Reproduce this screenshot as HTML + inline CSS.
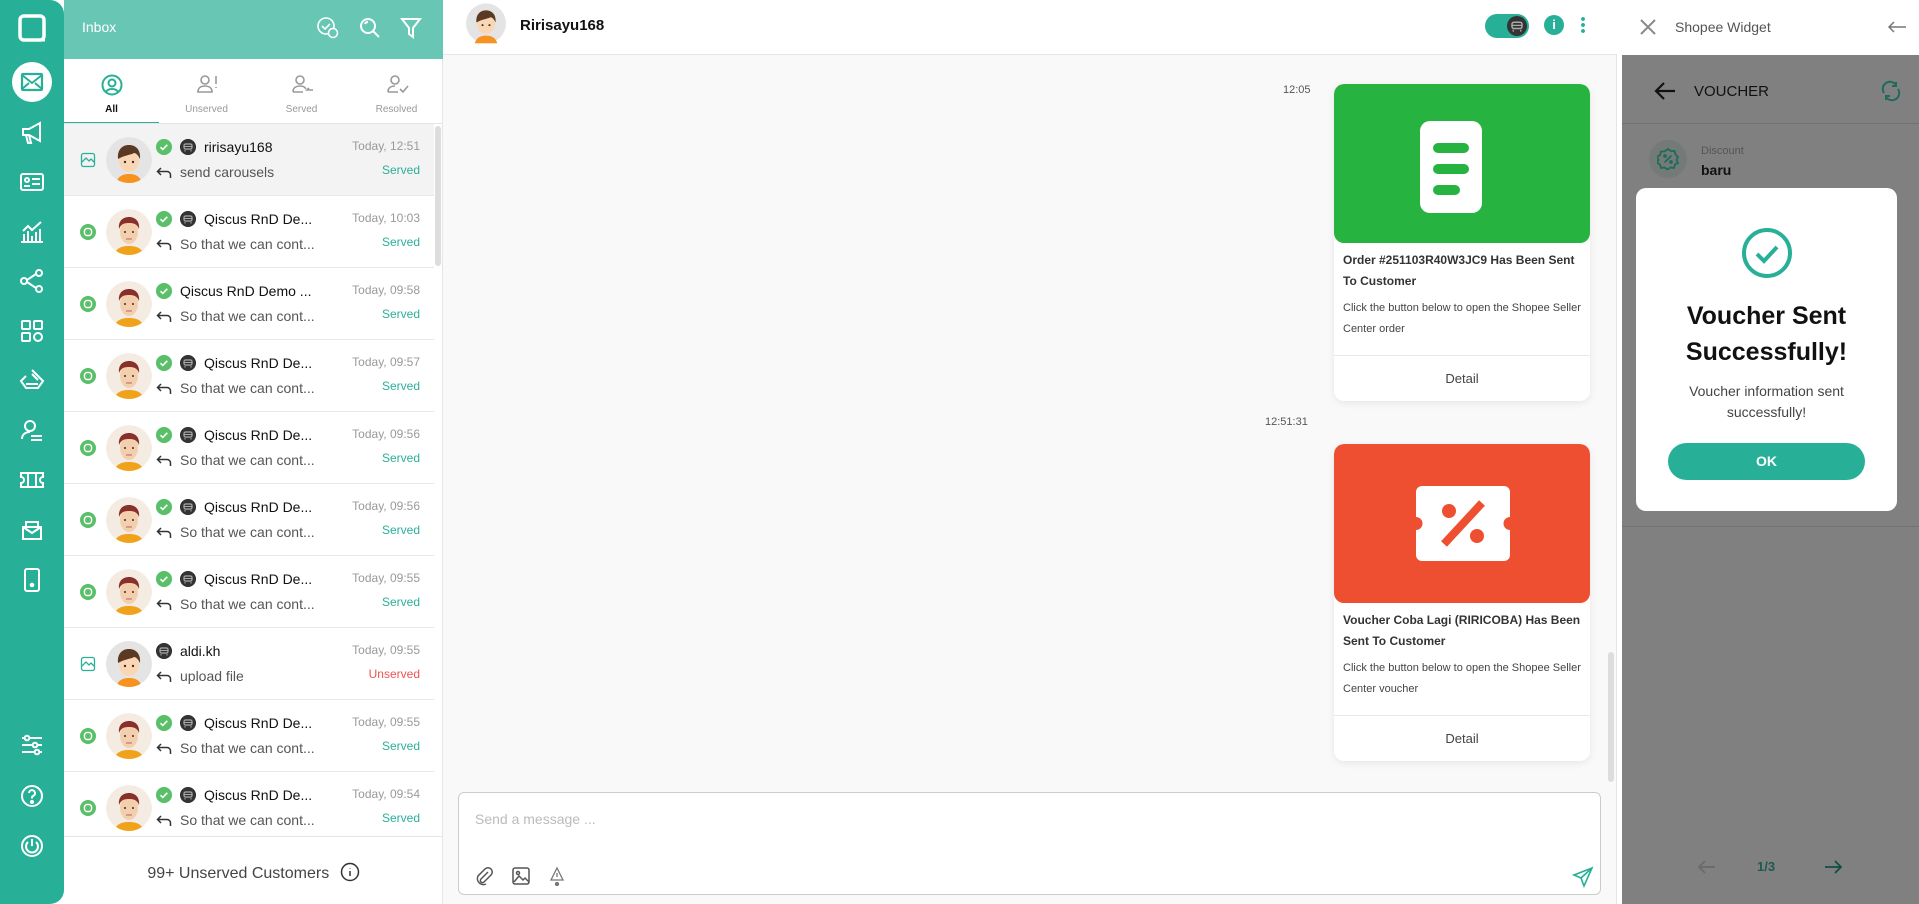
<!DOCTYPE html>
<html><head><meta charset="utf-8">
<style>
*{box-sizing:border-box;margin:0;padding:0}
body{width:1919px;height:904px;overflow:hidden;background:#fff;font-family:"Liberation Sans",sans-serif;position:relative}
.abs{position:absolute}
#side{left:0;top:0;width:64px;height:904px;background:#27b097;border-radius:0 14px 14px 0;z-index:3}
.si{position:absolute;left:17px;width:30px;height:30px}
#list{left:64px;top:0;width:379px;height:904px;background:#fff;border-right:1px solid #e6e6e6}
#lhead{left:0;top:0;width:379px;height:59px;background:#67c7b4}
.row{position:absolute;left:0;width:370px;height:72px;border-bottom:1px solid #e8e8e8}
.row .av{position:absolute;left:42px;top:13px;width:46px;height:46px;border-radius:50%;overflow:hidden}
.row .nm{position:absolute;top:15px;font-size:14px;color:#111;white-space:nowrap}
.row .msg{position:absolute;left:116px;top:40px;font-size:14px;color:#555;white-space:nowrap}
.row .tm{position:absolute;right:14px;top:15px;font-size:12px;color:#999}
.row .st{position:absolute;right:14px;top:39px;font-size:12px;color:#2ab097}
.chk{position:absolute;top:15px;left:92px;width:16px;height:16px;border-radius:50%;background:#5bbf6a}
.bot{position:absolute;top:15px;width:16px;height:16px;border-radius:50%;background:#333}
.rep{position:absolute;left:92px;top:42px;width:16px;height:14px}
.lic{position:absolute;left:16px;top:28px;width:16px;height:16px}
.tab{position:absolute;top:59px;width:95px;height:65px;text-align:center;font-size:10px;color:#999}
.card{position:absolute;left:1334px;width:256px;background:#fff;border-radius:10px;box-shadow:0 2px 8px rgba(0,0,0,.08);overflow:hidden}
.card .img{height:159px;border-radius:10px;position:relative}
.card .t{font-size:12px;font-weight:bold;color:#333;line-height:21px;padding:7px 9px 0}
.card .d{font-size:11px;color:#444;line-height:21px;padding:6px 9px 0}
.card .btn{position:absolute;bottom:0;left:0;right:0;height:46px;border-top:1px solid #e8e8e8;text-align:center;line-height:46px;font-size:13px;color:#444}
</style></head><body>
<svg width="0" height="0" style="position:absolute">
<defs>
<symbol id="boy" viewBox="0 0 46 46"><circle cx="23" cy="23" r="23" fill="#e4e4e4"/><path d="M10 46c2-7 7-9 13-9s11 2 13 9z" fill="#f7921e"/><ellipse cx="23" cy="24" rx="10" ry="11" fill="#fbd6b5"/><path d="M12 22c-1-10 5-14 11-14s12 4 11 14c-2-4-4-6-6-6-3 2-9 2-16 6z" fill="#5a3a22"/><circle cx="19" cy="25" r="1.2" fill="#333"/><circle cx="27" cy="25" r="1.2" fill="#333"/></symbol>
<symbol id="man" viewBox="0 0 46 46"><circle cx="23" cy="23" r="23" fill="#f4ece2"/><path d="M8 46c2-7 8-9 15-9s13 2 15 9z" fill="#f0a21a"/><ellipse cx="23" cy="23" rx="9" ry="12" fill="#f3cfae"/><path d="M13 20c-1-9 5-12 10-12s11 3 10 12c-2-5-5-6-10-6s-8 1-10 6z" fill="#8b2f2a"/><circle cx="19" cy="23" r="1" fill="#333"/><circle cx="27" cy="23" r="1" fill="#333"/><path d="M20 30h6" stroke="#b66" stroke-width="1"/></symbol>
<symbol id="botg" viewBox="0 0 16 16"><circle cx="8" cy="8" r="8" fill="#333"/><rect x="4" y="5" width="8" height="5" rx="1.5" fill="none" stroke="#aaa" stroke-width="1.2"/><path d="M5 11v1.5M11 11v1.5M4 7.5h8" stroke="#aaa" stroke-width="1"/></symbol>
<symbol id="chkg" viewBox="0 0 16 16"><circle cx="8" cy="8" r="8" fill="#5bbf6a"/><path d="M4.5 8.2l2.3 2.2 4.5-4.6" stroke="#fff" stroke-width="1.6" fill="none"/></symbol>
<symbol id="repg" viewBox="0 0 16 14"><path d="M5 2L1.5 5.5 5 9M1.5 5.5H11c2 0 3.5 1.5 3.5 3.5v3" stroke="#333" stroke-width="1.5" fill="none"/></symbol>
<symbol id="qg" viewBox="0 0 16 16"><circle cx="8" cy="8" r="8" fill="#5bbf6a"/><rect x="4.5" y="4.5" width="7" height="7" rx="2.5" fill="none" stroke="#fff" stroke-width="1.4"/></symbol>
<symbol id="imgg" viewBox="0 0 16 16"><rect x="1.5" y="1.5" width="13" height="13" rx="2" fill="none" stroke="#2ab097" stroke-width="1.3"/><path d="M2 10l4-4 3 3 2-2 3 3" stroke="#2ab097" stroke-width="1.3" fill="none"/></symbol>
</defs></svg>

<!-- Sidebar -->
<div id="side" class="abs">
<svg class="si" style="top:13px;width:30px;height:30px" viewBox="0 0 30 30"><path d="M7 3h16a4 4 0 0 1 4 4v16a4 4 0 0 1-4 4H7a4 4 0 0 1-4-4V7a4 4 0 0 1 4-4z" fill="none" stroke="#fff" stroke-width="3.5"/><path d="M22 27h6" stroke="#fff" stroke-width="3"/></svg>
<div style="position:absolute;left:12px;top:62px;width:40px;height:40px;border-radius:50%;background:#fff"></div>
<svg class="si" style="left:20px;top:70px;width:24px;height:24px" viewBox="0 0 24 24"><rect x="2" y="4" width="20" height="16" rx="1" fill="none" stroke="#27b097" stroke-width="2.2"/><path d="M2 5l10 8 10-8M2 19l7-6M22 19l-7-6" stroke="#27b097" stroke-width="2" fill="none"/></svg>
<svg class="si" style="top:118px" viewBox="0 0 30 30" fill="none" stroke="#fff" stroke-width="2"><path d="M6 11h6l11-6v18l-11-6H6zM9 17l2 8h3l-2-8"/></svg>
<svg class="si" style="top:167px" viewBox="0 0 30 30" fill="none" stroke="#fff" stroke-width="2"><rect x="4" y="7" width="22" height="16" rx="2"/><circle cx="10" cy="13" r="2"/><path d="M7 19h6M15 12h8M15 17h8"/></svg>
<svg class="si" style="top:217px" viewBox="0 0 30 30" fill="none" stroke="#fff" stroke-width="2"><path d="M4 25h22M7 24v-7M11 24v-10M15 24v-5M19 24v-9M23 24v-12M6 14l5-5 4 4 9-8"/></svg>
<svg class="si" style="top:266px" viewBox="0 0 30 30" fill="none" stroke="#fff" stroke-width="2"><circle cx="7" cy="15" r="3"/><circle cx="22" cy="7" r="3"/><circle cx="22" cy="23" r="3"/><path d="M10 14l9-6M10 16l9 6"/></svg>
<svg class="si" style="top:316px" viewBox="0 0 30 30" fill="none" stroke="#fff" stroke-width="2"><rect x="5" y="5" width="8" height="8" rx="1"/><rect x="17" y="5" width="8" height="8" rx="1"/><rect x="5" y="17" width="8" height="8" rx="1"/><rect x="17" y="17" width="8" height="8" rx="4"/></svg>
<svg class="si" style="top:365px" viewBox="0 0 30 30" fill="none" stroke="#fff" stroke-width="2"><path d="M15 5l11 11-5 7H9l-5-7 5-5M15 9l6 6M9 19h12"/></svg>
<svg class="si" style="top:415px" viewBox="0 0 30 30" fill="none" stroke="#fff" stroke-width="2"><circle cx="13" cy="11" r="5"/><path d="M5 24c0-5 4-7 8-7M14 21h11M14 25h11"/></svg>
<svg class="si" style="top:465px" viewBox="0 0 30 30" fill="none" stroke="#fff" stroke-width="2"><path d="M4 8h22v4a3 3 0 0 0 0 6v4H4v-4a3 3 0 0 0 0-6zM11 8v14M19 8v14"/></svg>
<svg class="si" style="top:515px" viewBox="0 0 30 30" fill="none" stroke="#fff" stroke-width="2"><path d="M6 12h18v12H6zM6 12l9 6 9-6M9 12V7h12v5"/></svg>
<svg class="si" style="top:565px" viewBox="0 0 30 30" fill="none" stroke="#fff" stroke-width="2"><rect x="8" y="4" width="14" height="22" rx="2"/><circle cx="15" cy="20" r="1.3" fill="#fff"/></svg>
<svg class="si" style="top:730px" viewBox="0 0 30 30" fill="none" stroke="#fff" stroke-width="2"><path d="M5 8h20M5 15h20M5 22h20"/><circle cx="10" cy="8" r="2.3" fill="#27b097"/><circle cx="18" cy="15" r="2.3" fill="#27b097"/><circle cx="20" cy="22" r="2.3" fill="#27b097"/></svg>
<svg class="si" style="top:781px" viewBox="0 0 30 30" fill="none" stroke="#fff" stroke-width="2"><circle cx="15" cy="15" r="10"/><path d="M12 12a3 3 0 1 1 4 3c-1 .5-1 1-1 2.5"/><circle cx="15" cy="21" r="1" fill="#fff"/></svg>
<svg class="si" style="top:831px" viewBox="0 0 30 30" fill="none" stroke="#fff" stroke-width="2"><circle cx="15" cy="15" r="10"/><path d="M11 11a6 6 0 1 0 8 0M15 8v7"/></svg>
</div>

<!-- List -->
<div id="list" class="abs">
<div id="lhead" class="abs">
<div style="position:absolute;left:18px;top:19px;color:#fff;font-size:14px">Inbox</div>
<svg style="position:absolute;left:252px;top:16px" width="24" height="24" viewBox="0 0 24 24" fill="none" stroke="#fff" stroke-width="1.6"><circle cx="10" cy="10" r="8"/><path d="M6 10l3 3 5-5"/><circle cx="17" cy="17" r="4.5" fill="#67c7b4"/></svg>
<svg style="position:absolute;left:294px;top:16px" width="24" height="24" viewBox="0 0 24 24" fill="none" stroke="#fff" stroke-width="2"><circle cx="10" cy="10" r="7"/><path d="M15 15l6 6M7 8a3 3 0 0 1 3-2"/></svg>
<svg style="position:absolute;left:336px;top:16px" width="22" height="24" viewBox="0 0 22 24" fill="none" stroke="#fff" stroke-width="2"><path d="M2 3h18l-7 9v9l-4-3v-6z"/></svg>
</div>
<div class="tab" style="left:0;color:#111;font-weight:bold;border-bottom:2px solid #27b097">
<svg style="position:absolute;left:37px;top:15px" width="22" height="22" viewBox="0 0 22 22" fill="none" stroke="#27b097" stroke-width="2"><circle cx="11" cy="11" r="9.5"/><circle cx="11" cy="9" r="3.5"/><path d="M5 18c2-4 10-4 12 0"/></svg>
<div style="position:absolute;top:45px;width:100%">All</div></div>
<div class="tab" style="left:95px"><svg style="position:absolute;left:36px;top:15px" width="24" height="20" viewBox="0 0 24 20" fill="none" stroke="#999" stroke-width="1.6"><circle cx="10" cy="6" r="4"/><path d="M3 18c0-5 4-6 7-6s7 1 7 6zM21 2v8M21 13v1"/></svg><div style="position:absolute;top:45px;width:100%">Unserved</div></div>
<div class="tab" style="left:190px"><svg style="position:absolute;left:36px;top:15px" width="24" height="20" viewBox="0 0 24 20" fill="none" stroke="#999" stroke-width="1.6"><circle cx="10" cy="6" r="4"/><path d="M3 18c0-5 4-6 7-6s5 1 6 3M3 18h10M23 16h-6l2-2"/></svg><div style="position:absolute;top:45px;width:100%">Served</div></div>
<div class="tab" style="left:285px"><svg style="position:absolute;left:36px;top:15px" width="24" height="20" viewBox="0 0 24 20" fill="none" stroke="#999" stroke-width="1.6"><circle cx="10" cy="6" r="4"/><path d="M3 18c0-5 4-6 7-6M3 18h10M15 15l3 3 5-6"/></svg><div style="position:absolute;top:45px;width:100%">Resolved</div></div>
<div style="position:absolute;left:0;top:123px;width:379px;height:1px;background:#e5e5e5"></div>

<div style="position:absolute;left:0;top:124px;width:379px;height:712px;overflow:hidden">
<div class="row" style="top:0;background:#f3f3f3"><svg class="lic"><use href="#imgg"/></svg><svg class="av"><use href="#boy"/></svg><svg class="chk"><use href="#chkg"/></svg><svg class="bot" style="left:116px"><use href="#botg"/></svg><div class="nm" style="left:140px">ririsayu168</div><svg class="rep"><use href="#repg"/></svg><div class="msg">send carousels</div><div class="tm">Today, 12:51</div><div class="st">Served</div></div>
<div class="row" style="top:72px"><svg class="lic"><use href="#qg"/></svg><svg class="av"><use href="#man"/></svg><svg class="chk"><use href="#chkg"/></svg><svg class="bot" style="left:116px"><use href="#botg"/></svg><div class="nm" style="left:140px">Qiscus RnD De...</div><svg class="rep"><use href="#repg"/></svg><div class="msg">So that we can cont...</div><div class="tm">Today, 10:03</div><div class="st">Served</div></div>
<div class="row" style="top:144px"><svg class="lic"><use href="#qg"/></svg><svg class="av"><use href="#man"/></svg><svg class="chk"><use href="#chkg"/></svg><div class="nm" style="left:116px">Qiscus RnD Demo ...</div><svg class="rep"><use href="#repg"/></svg><div class="msg">So that we can cont...</div><div class="tm">Today, 09:58</div><div class="st">Served</div></div>
<div class="row" style="top:216px"><svg class="lic"><use href="#qg"/></svg><svg class="av"><use href="#man"/></svg><svg class="chk"><use href="#chkg"/></svg><svg class="bot" style="left:116px"><use href="#botg"/></svg><div class="nm" style="left:140px">Qiscus RnD De...</div><svg class="rep"><use href="#repg"/></svg><div class="msg">So that we can cont...</div><div class="tm">Today, 09:57</div><div class="st">Served</div></div>
<div class="row" style="top:288px"><svg class="lic"><use href="#qg"/></svg><svg class="av"><use href="#man"/></svg><svg class="chk"><use href="#chkg"/></svg><svg class="bot" style="left:116px"><use href="#botg"/></svg><div class="nm" style="left:140px">Qiscus RnD De...</div><svg class="rep"><use href="#repg"/></svg><div class="msg">So that we can cont...</div><div class="tm">Today, 09:56</div><div class="st">Served</div></div>
<div class="row" style="top:360px"><svg class="lic"><use href="#qg"/></svg><svg class="av"><use href="#man"/></svg><svg class="chk"><use href="#chkg"/></svg><svg class="bot" style="left:116px"><use href="#botg"/></svg><div class="nm" style="left:140px">Qiscus RnD De...</div><svg class="rep"><use href="#repg"/></svg><div class="msg">So that we can cont...</div><div class="tm">Today, 09:56</div><div class="st">Served</div></div>
<div class="row" style="top:432px"><svg class="lic"><use href="#qg"/></svg><svg class="av"><use href="#man"/></svg><svg class="chk"><use href="#chkg"/></svg><svg class="bot" style="left:116px"><use href="#botg"/></svg><div class="nm" style="left:140px">Qiscus RnD De...</div><svg class="rep"><use href="#repg"/></svg><div class="msg">So that we can cont...</div><div class="tm">Today, 09:55</div><div class="st">Served</div></div>
<div class="row" style="top:504px"><svg class="lic"><use href="#imgg"/></svg><svg class="av"><use href="#boy"/></svg><svg class="bot" style="left:92px"><use href="#botg"/></svg><div class="nm" style="left:116px">aldi.kh</div><svg class="rep"><use href="#repg"/></svg><div class="msg">upload file</div><div class="tm">Today, 09:55</div><div class="st" style="color:#ef5350">Unserved</div></div>
<div class="row" style="top:576px"><svg class="lic"><use href="#qg"/></svg><svg class="av"><use href="#man"/></svg><svg class="chk"><use href="#chkg"/></svg><svg class="bot" style="left:116px"><use href="#botg"/></svg><div class="nm" style="left:140px">Qiscus RnD De...</div><svg class="rep"><use href="#repg"/></svg><div class="msg">So that we can cont...</div><div class="tm">Today, 09:55</div><div class="st">Served</div></div>
<div class="row" style="top:648px"><svg class="lic"><use href="#qg"/></svg><svg class="av"><use href="#man"/></svg><svg class="chk"><use href="#chkg"/></svg><svg class="bot" style="left:116px"><use href="#botg"/></svg><div class="nm" style="left:140px">Qiscus RnD De...</div><svg class="rep"><use href="#repg"/></svg><div class="msg">So that we can cont...</div><div class="tm">Today, 09:54</div><div class="st">Served</div></div>
<div style="position:absolute;left:371px;top:2px;width:6px;height:140px;border-radius:3px;background:#ddd"></div>
</div>
<div style="position:absolute;left:0;top:836px;width:379px;height:1px;background:#e5e5e5"></div>
<div style="position:absolute;left:0;top:862px;width:379px;text-align:center;font-size:16px;color:#444">99+ Unserved Customers <svg style="vertical-align:-4px;margin-left:6px" width="20" height="20" viewBox="0 0 20 20" fill="none" stroke="#333" stroke-width="1.5"><circle cx="10" cy="10" r="8.5"/><path d="M10 9v5M10 6v.5"/></svg></div>
</div>

<!-- Chat -->
<div class="abs" style="left:443px;top:0;width:1174px;height:904px;background:#f9f9f9;border-right:1px solid #e6e6e6">
<div style="position:absolute;left:0;top:0;width:1174px;height:55px;background:#fff;border-bottom:1px solid #e6e6e6">
<svg style="position:absolute;left:23px;top:2px" width="40" height="48" viewBox="0 3 46 46"><use href="#boy"/></svg>
<div style="position:absolute;left:77px;top:17px;font-size:15px;font-weight:bold;color:#111">Ririsayu168</div>
<div style="position:absolute;left:1042px;top:14px;width:44px;height:24px;border-radius:12px;background:#27b097"><svg style="position:absolute;right:2px;top:2px" width="20" height="20"><use href="#botg"/></svg></div>
<div style="position:absolute;left:1101px;top:15px;width:20px;height:20px;border-radius:50%;background:#27b097;color:#fff;font-size:13px;font-weight:bold;text-align:center;line-height:20px">i</div>
<div style="position:absolute;left:1138px;top:16px;width:4px;height:18px;background:radial-gradient(circle,#27b097 1.8px,transparent 2px) 0 0/4px 6px"></div>
</div>
<div style="position:absolute;left:840px;top:84px;font-size:11px;color:#555">12:05</div>
<div style="position:absolute;left:822px;top:416px;font-size:11px;color:#555">12:51:31</div>
<div style="position:absolute;left:1165px;top:652px;width:6px;height:130px;border-radius:3px;background:#ddd"></div>
<div style="position:absolute;left:15px;top:792px;width:1143px;height:103px;background:#fff;border:1px solid #ccc;border-radius:6px">
<div style="position:absolute;left:16px;top:18px;font-size:14px;color:#bbb">Send a message ...</div>
<svg style="position:absolute;left:15px;top:73px" width="20" height="20" viewBox="0 0 20 20" fill="none" stroke="#555" stroke-width="1.5"><path d="M14 6l-7 7a2 2 0 0 0 3 3l7-7a4 4 0 0 0-6-6L4 10a6 6 0 0 0 8 8"/></svg>
<svg style="position:absolute;left:52px;top:73px" width="20" height="20" viewBox="0 0 20 20" fill="none" stroke="#555" stroke-width="1.5"><rect x="2" y="2" width="16" height="16" rx="2"/><path d="M3 16l5-6 4 4 2-2 4 4"/><circle cx="7" cy="7" r="1.5"/></svg>
<svg style="position:absolute;left:89px;top:73px" width="18" height="20" viewBox="0 0 18 20" fill="none" stroke="#777" stroke-width="1.3"><path d="M9 2l6 12H3z"/><path d="M9 7v4"/><circle cx="9" cy="18" r="1.5" fill="#777"/></svg>
<svg style="position:absolute;left:1113px;top:73px" width="22" height="22" viewBox="0 0 22 22" fill="none" stroke="#27b097" stroke-width="1.6"><path d="M20 2L2 9l7 3 3 8zM9 12L20 2"/></svg>
</div>
</div>

<!-- cards -->
<div class="card" style="top:84px;height:317px">
<div class="img" style="background:#26b33f"><svg style="position:absolute;left:86px;top:37px" width="62" height="92" viewBox="0 0 62 92"><rect x="0" y="0" width="62" height="92" rx="10" fill="#fff"/><rect x="13" y="22" width="36" height="10" rx="5" fill="#26b33f"/><rect x="13" y="43" width="36" height="10" rx="5" fill="#26b33f"/><rect x="13" y="64" width="27" height="10" rx="5" fill="#26b33f"/></svg></div>
<div class="t">Order #251103R40W3JC9 Has Been Sent To Customer</div>
<div class="d">Click the button below to open the Shopee Seller Center order</div>
<div class="btn">Detail</div></div>
<div class="card" style="top:444px;height:317px">
<div class="img" style="background:#ee4f30"><svg style="position:absolute;left:82px;top:42px" width="94" height="75" viewBox="0 0 94 75"><path d="M6 0h82a6 6 0 0 1 6 6v25a6 6 0 0 0 0 13v25a6 6 0 0 1-6 6H6a6 6 0 0 1-6-6V44a6 6 0 0 0 0-13V6a6 6 0 0 1 6-6z" fill="#fff"/><circle cx="33" cy="25" r="7" fill="#ee4f30"/><circle cx="61" cy="50" r="7" fill="#ee4f30"/><path d="M28 58l38-41" stroke="#ee4f30" stroke-width="8"/></svg></div>
<div class="t">Voucher Coba Lagi (RIRICOBA) Has Been Sent To Customer</div>
<div class="d">Click the button below to open the Shopee Seller Center voucher</div>
<div class="btn">Detail</div></div>

<!-- Right panel -->
<div class="abs" style="left:1617px;top:0;width:302px;height:55px;background:#fff">
<svg style="position:absolute;left:22px;top:18px" width="18" height="18" viewBox="0 0 18 18" stroke="#888" stroke-width="2"><path d="M2 2l14 14M16 2L2 16"/></svg>
<div style="position:absolute;left:58px;top:19px;font-size:14px;color:#555">Shopee Widget</div>
<svg style="position:absolute;left:270px;top:20px" width="20" height="14" viewBox="0 0 20 14" fill="none" stroke="#777" stroke-width="1.5"><path d="M19 7H2M7 2L2 7l5 5"/></svg>
</div>
<div class="abs" style="left:1622px;top:55px;width:297px;height:849px;background:#808080">
<div style="position:absolute;left:0;top:68px;width:297px;height:1px;background:#727272"></div>
<svg style="position:absolute;left:32px;top:26px" width="22" height="20" viewBox="0 0 22 20" fill="none" stroke="#111" stroke-width="2.2"><path d="M21 10H3M10 2L2 10l8 8"/></svg>
<div style="position:absolute;left:72px;top:28px;font-size:15px;color:#111">VOUCHER</div>
<svg style="position:absolute;left:258px;top:25px" width="22" height="22" viewBox="0 0 22 22" fill="none" stroke="#1e6b5a" stroke-width="2"><path d="M4 13a7 7 0 0 1 12-8M18 9a7 7 0 0 1-12 8M16 2v4h-4M6 20v-4h4"/></svg>
<div style="position:absolute;left:27px;top:85px;width:38px;height:38px;border-radius:50%;background:#747a77"></div>
<svg style="position:absolute;left:35px;top:93px" width="22" height="22" viewBox="0 0 22 22" fill="none" stroke="#1e6b5a" stroke-width="1.8"><path d="M11 1l3 2 3.5 0 1 3.5 2.5 2.5-1.5 3 1.5 3-3 1.5-1 3.5-3.5-.5-3 2-3-2-3.5.5-1-3.5-3-1.5 1.5-3-1.5-3 3-2 1-3.5 3.5 0z"/><path d="M7.5 14.5l7-7"/><circle cx="8" cy="8" r="1"/><circle cx="14" cy="14" r="1"/></svg>
<div style="position:absolute;left:79px;top:90px;font-size:11px;color:#555">Discount</div>
<div style="position:absolute;left:79px;top:107px;font-size:14px;font-weight:bold;color:#111">baru</div>
<div style="position:absolute;left:0;top:471px;width:297px;height:1px;background:#727272"></div>
<svg style="position:absolute;left:76px;top:804px" width="18" height="16" viewBox="0 0 18 16" fill="none" stroke="#6a6a6a" stroke-width="1.8"><path d="M17 8H2M7 2L1 8l6 6"/></svg>
<div style="position:absolute;left:135px;top:804px;font-size:13px;font-weight:bold;color:#1e5a4d">1/3</div>
<svg style="position:absolute;left:202px;top:804px" width="18" height="16" viewBox="0 0 18 16" fill="none" stroke="#124e40" stroke-width="1.8"><path d="M1 8h15M11 2l6 6-6 6"/></svg>
<div style="position:absolute;left:14px;top:133px;width:261px;height:323px;background:#fff;border-radius:10px">
<svg style="position:absolute;left:105px;top:38px" width="52" height="54" viewBox="0 0 52 54" fill="none" stroke="#27b097" stroke-width="4"><circle cx="26" cy="27" r="23"/><path d="M16 28l7 7 13-14"/></svg>
<div style="position:absolute;left:0;top:110px;width:261px;text-align:center;font-size:25px;font-weight:bold;color:#111;line-height:36px">Voucher Sent Successfully!</div>
<div style="position:absolute;left:0;top:193px;width:261px;text-align:center;font-size:14px;color:#444;line-height:21px">Voucher information sent<br>successfully!</div>
<div style="position:absolute;left:32px;top:255px;width:197px;height:37px;border-radius:19px;background:#27b097;color:#fff;font-weight:bold;font-size:14px;text-align:center;line-height:37px">OK</div>
</div>
</div>
</body></html>
